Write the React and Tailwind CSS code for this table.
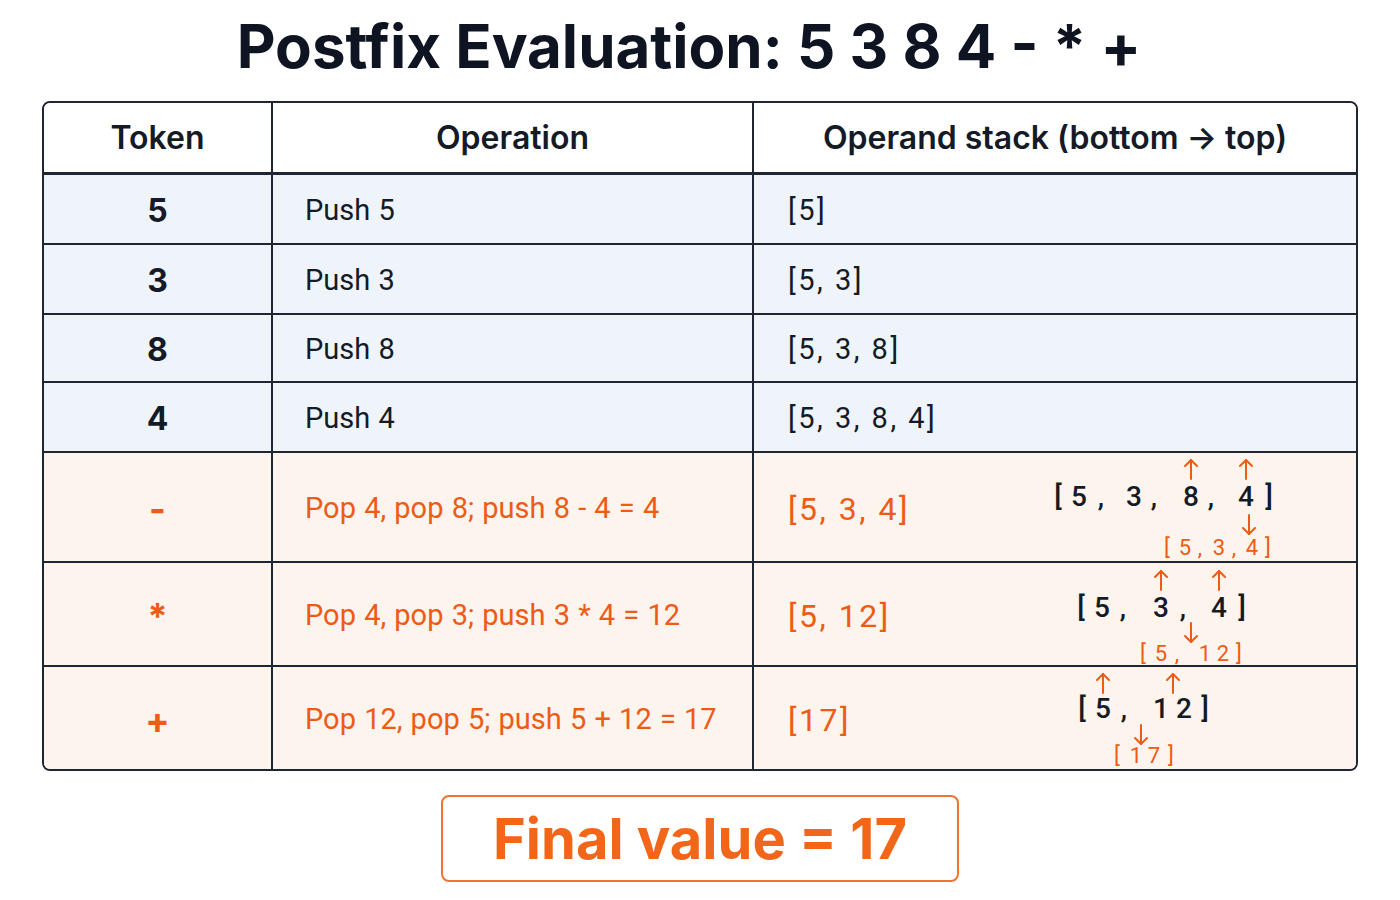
import React from "react";

const ORANGE = "#ee5b14";

const rows = [
  { tok: "5", op: "Push 5", st: "[5]", kind: "push", h: "h-[70px]" },
  { tok: "3", op: "Push 3", st: "[5, 3]", kind: "push", h: "h-[70px]" },
  { tok: "8", op: "Push 8", st: "[5, 3, 8]", kind: "push", h: "h-[68px]" },
  { tok: "4", op: "Push 4", st: "[5, 3, 8, 4]", kind: "push", h: "h-[70px]" },
  {
    tok: "-",
    op: "Pop 4, pop 8; push 8 - 4 = 4",
    st: "[5, 3, 4]",
    kind: "op",
    h: "h-[110px]",
    ann: {
      mainY: 44,
      main: [["[", 1057], ["5", 1078], [",", 1100], ["3", 1133], [",", 1153], ["8", 1190], [",", 1210], ["4", 1245], ["]", 1268]],
      upY: 16,
      up: [1190, 1245],
      downY: 72,
      down: 1248,
      resY: 95,
      res: [["[", 1166], ["5", 1184], [",", 1199], ["3", 1218], [",", 1233], ["4", 1251], ["]", 1267]],
    },
  },
  {
    tok: "*",
    op: "Pop 4, pop 3; push 3 * 4 = 12",
    st: "[5, 12]",
    kind: "op",
    h: "h-[104px]",
    ann: {
      mainY: 45,
      main: [["[", 1080], ["5", 1101], [",", 1122], ["3", 1160], [",", 1182], ["4", 1218], ["]", 1241]],
      upY: 17,
      up: [1160, 1218],
      downY: 70,
      down: 1190,
      resY: 91,
      res: [["[", 1142], ["5", 1160], [",", 1176], ["1", 1204], ["2", 1222], ["]", 1238]],
    },
  },
  {
    tok: "+",
    op: "Pop 12, pop 5; push 5 + 12 = 17",
    st: "[17]",
    kind: "op",
    h: "h-[102px]",
    last: true,
    ann: {
      mainY: 42,
      main: [["[", 1081], ["5", 1102], [",", 1123], ["1", 1160], ["2", 1183], ["]", 1204]],
      upY: 16,
      up: [1102, 1172],
      downY: 68,
      down: 1140,
      resY: 89,
      res: [["[", 1116], ["1", 1135], ["7", 1153], ["]", 1170]],
    },
  },
];

const CELL_X = 753;

function Arrow({ x, y, dir }) {
  return (
    <svg
      className="absolute"
      width="16"
      height="22"
      viewBox="0 0 16 22"
      style={{ left: x - CELL_X - 8, top: y - 11 }}
      fill="none"
      stroke={ORANGE}
      strokeWidth="2"
      strokeLinecap="round"
      strokeLinejoin="round"
    >
      {dir === "up" ? (
        <>
          <path d="M8 21V2" />
          <path d="M2 8l6-6 6 6" />
        </>
      ) : (
        <>
          <path d="M8 1v19" />
          <path d="M2 14l6 6 6-6" />
        </>
      )}
    </svg>
  );
}

function Glyph({ ch, x, y, small }) {
  return (
    <span
      className={
        "absolute -translate-x-1/2 -translate-y-1/2 leading-none " +
        (small ? "text-[22px] text-[#ee5b14]" : "text-[28px] text-[#141a26] font-medium")
      }
      style={{ left: x - CELL_X, top: y }}
    >
      {ch}
    </span>
  );
}

function Annotation({ ann }) {
  return (
    <div className="absolute inset-0 pointer-events-none">
      {ann.up.map((x, i) => (
        <Arrow key={"u" + i} x={x} y={ann.upY} dir="up" />
      ))}
      {ann.main.map(([ch, x], i) => (
        <Glyph key={"m" + i} ch={ch} x={x} y={ann.mainY} />
      ))}
      <Arrow x={ann.down} y={ann.downY} dir="down" />
      {ann.res.map(([ch, x], i) => (
        <Glyph key={"r" + i} ch={ch} x={x} y={ann.resY} small />
      ))}
    </div>
  );
}

export default function App() {
  return (
    <div className="w-[1400px] h-[900px] bg-white flex flex-col items-center" style={{ fontFamily: "Roboto, 'Liberation Sans', sans-serif" }}>
      <div className="h-[92px] flex items-center justify-center pr-[22px]">
        <h1 className="text-[60px] font-bold text-[#0f1422]" style={{ fontFamily: "Inter, 'Liberation Sans', sans-serif" }}>
          Postfix Evaluation: 5 3 8 4 - * +
        </h1>
      </div>

      <div className="mt-[9px] w-[1316px] border-2 border-[#1e2533] rounded-lg overflow-hidden">
        <div className="flex h-[72px] bg-white border-b-[3px] border-[#1e2533]" style={{ fontFamily: "Inter, 'Liberation Sans', sans-serif" }}>
          <div className="w-[229px] border-r-2 border-[#1e2533] flex items-center justify-center text-[32px] font-semibold text-[#141a26]">
            Token
          </div>
          <div className="w-[481px] border-r-2 border-[#1e2533] flex items-center justify-center text-[32px] font-semibold text-[#141a26]">
            Operation
          </div>
          <div className="flex-1 flex items-center justify-center text-[32px] font-semibold text-[#141a26]">
            Operand stack (bottom → top)
          </div>
        </div>

        {rows.map((r, i) => {
          const isOp = r.kind === "op";
          return (
            <div
              key={i}
              className={
                "flex " +
                r.h +
                " " +
                (isOp ? "bg-[#fdf4ee]" : "bg-[#eff4fb]") +
                (r.last ? "" : " border-b-2 border-[#1e2533]")
              }
            >
              <div
                className={
                  "w-[229px] border-r-2 border-[#1e2533] flex items-center justify-center font-bold pt-[4px] " +
                  (isOp ? "text-[#ee5b14] text-[36px]" : "text-[#141a26] text-[32px]")
                }
                style={{ fontFamily: "Inter, 'Liberation Sans', sans-serif" }}
              >
                {r.tok}
              </div>
              <div
                className={
                  "w-[481px] border-r-2 border-[#1e2533] flex items-center pl-[32px] pt-[4px] text-[29px] [word-spacing:1px] " +
                  (isOp ? "text-[#ee5b14]" : "text-[#141a26]")
                }
              >
                {r.op}
              </div>
              <div className="flex-1 relative flex items-center pl-[34px] pt-[4px]">
                <span
                  className={
                    isOp
                      ? "text-[32px] text-[#ee5b14] tracking-[2.5px]"
                      : "text-[29px] text-[#141a26] tracking-[2.5px]"
                  }
                >
                  {r.st}
                </span>
                {r.ann && <Annotation ann={r.ann} />}
              </div>
            </div>
          );
        })}
      </div>

      <div className="mt-[24px] w-[518px] h-[87px] border-2 border-[#f0732e] rounded-lg flex items-center justify-center">
        <span className="text-[56px] font-bold text-[#f2661a]" style={{ fontFamily: "Inter, 'Liberation Sans', sans-serif" }}>
          Final value = 17
        </span>
      </div>
    </div>
  );
}
